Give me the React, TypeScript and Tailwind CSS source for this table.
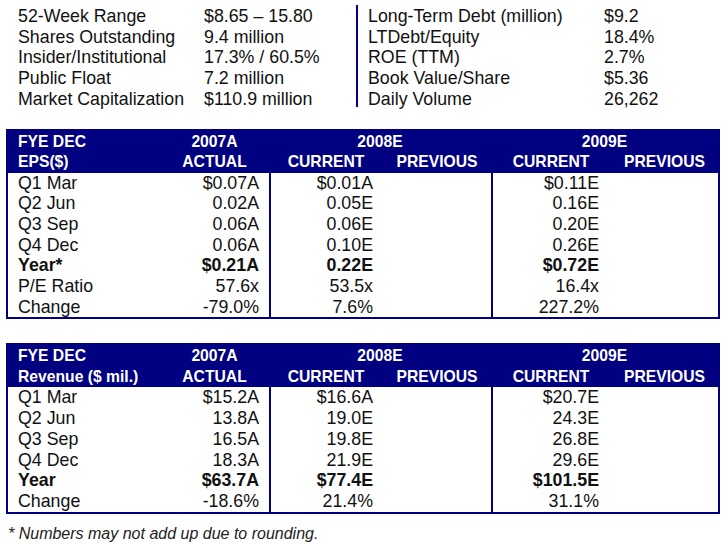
import React from 'react'

type Row = { label: string; a: string; c08: string; c09: string; bold?: boolean }

const epsRows: Row[] = [
  { label: 'Q1 Mar', a: '$0.07A', c08: '$0.01A', c09: '$0.11E' },
  { label: 'Q2 Jun', a: '0.02A', c08: '0.05E', c09: '0.16E' },
  { label: 'Q3 Sep', a: '0.06A', c08: '0.06E', c09: '0.20E' },
  { label: 'Q4 Dec', a: '0.06A', c08: '0.10E', c09: '0.26E' },
  { label: 'Year*', a: '$0.21A', c08: '0.22E', c09: '$0.72E', bold: true },
  { label: 'P/E Ratio', a: '57.6x', c08: '53.5x', c09: '16.4x' },
  { label: 'Change', a: '-79.0%', c08: '7.6%', c09: '227.2%' },
]

const revRows: Row[] = [
  { label: 'Q1 Mar', a: '$15.2A', c08: '$16.6A', c09: '$20.7E' },
  { label: 'Q2 Jun', a: '13.8A', c08: '19.0E', c09: '24.3E' },
  { label: 'Q3 Sep', a: '16.5A', c08: '19.8E', c09: '26.8E' },
  { label: 'Q4 Dec', a: '18.3A', c08: '21.9E', c09: '29.6E' },
  { label: 'Year', a: '$63.7A', c08: '$77.4E', c09: '$101.5E', bold: true },
  { label: 'Change', a: '-18.6%', c08: '21.4%', c09: '31.1%' },
]

const leftStats = [
  ['52-Week Range', '$8.65 – 15.80'],
  ['Shares Outstanding', '9.4 million'],
  ['Insider/Institutional', '17.3% / 60.5%'],
  ['Public Float', '7.2 million'],
  ['Market Capitalization', '$110.9 million'],
]

const rightStats = [
  ['Long-Term Debt (million)', '$9.2'],
  ['LTDebt/Equity', '18.4%'],
  ['ROE (TTM)', '2.7%'],
  ['Book Value/Share', '$5.36'],
  ['Daily Volume', '26,262'],
]

const cols = 'grid grid-cols-[152px_109px_114px_108px_120px_107px]'

const EstimateTable: React.FC<{ title: string; rows: Row[] }> = ({ title, rows }) => (
  <div className="ml-[6px] w-[714px] border-2 border-[#000080]">
    <div className={`${cols} bg-[#000080] text-white font-bold text-[15.7px] leading-[20.5px] pt-[1px] pb-[0px]`}>
      <div className="pl-[10px]">FYE DEC</div>
      <div className="text-center">2007A</div>
      <div className="col-span-2 text-center">2008E</div>
      <div className="col-span-2 text-center">2009E</div>
      <div className="pl-[10px] whitespace-nowrap">{title}</div>
      <div className="text-center">ACTUAL</div>
      <div className="text-center">CURRENT</div>
      <div className="text-center">PREVIOUS</div>
      <div className="text-center">CURRENT</div>
      <div className="text-center">PREVIOUS</div>
    </div>
    <div className={`${cols} text-[17.8px] leading-[20.7px]`}>
      {rows.map((r) => (
        <React.Fragment key={r.label}>
          <div className={`pl-[10px] ${r.bold ? 'font-bold' : ''}`}>{r.label}</div>
          <div className={`text-right pr-[10px] ${r.bold ? 'font-bold' : ''}`}>{r.a}</div>
          <div className={`text-right pr-[10px] border-l-2 border-[#000080] ${r.bold ? 'font-bold' : ''}`}>{r.c08}</div>
          <div></div>
          <div className={`text-right pr-[12px] border-l-2 border-[#000080] ${r.bold ? 'font-bold' : ''}`}>{r.c09}</div>
          <div></div>
        </React.Fragment>
      ))}
    </div>
  </div>
)

const App: React.FC = () => {
  return (
    <div className="w-[725px] h-[544px] bg-white text-[#111] font-['Liberation_Sans',Arial,sans-serif] overflow-hidden">
      <div className="flex pt-[6px] text-[17.8px] leading-[20.7px]">
        <div className="w-[356px] pl-[18px] grid grid-cols-[186px_1fr]">
          {leftStats.map(([k, v]) => (
            <React.Fragment key={k}>
              <div className="whitespace-nowrap">{k}</div>
              <div className="whitespace-nowrap">{v}</div>
            </React.Fragment>
          ))}
        </div>
        <div className="w-[2px] bg-[#000080] -mt-[1px] mb-[3px]"></div>
        <div className="pl-[10px] grid grid-cols-[236px_1fr]">
          {rightStats.map(([k, v]) => (
            <React.Fragment key={k}>
              <div className="whitespace-nowrap">{k}</div>
              <div className="whitespace-nowrap">{v}</div>
            </React.Fragment>
          ))}
        </div>
      </div>

      <div className="mt-[19px]">
        <EstimateTable title="EPS($)" rows={epsRows} />
      </div>

      <div className="mt-[24px]">
        <EstimateTable title="Revenue ($ mil.)" rows={revRows} />
      </div>

      <p className="mt-[11px] pl-[8px] italic text-[16px] leading-[18px] text-[#222]">
        * Numbers may not add up due to rounding.
      </p>
    </div>
  )
}

export default App
